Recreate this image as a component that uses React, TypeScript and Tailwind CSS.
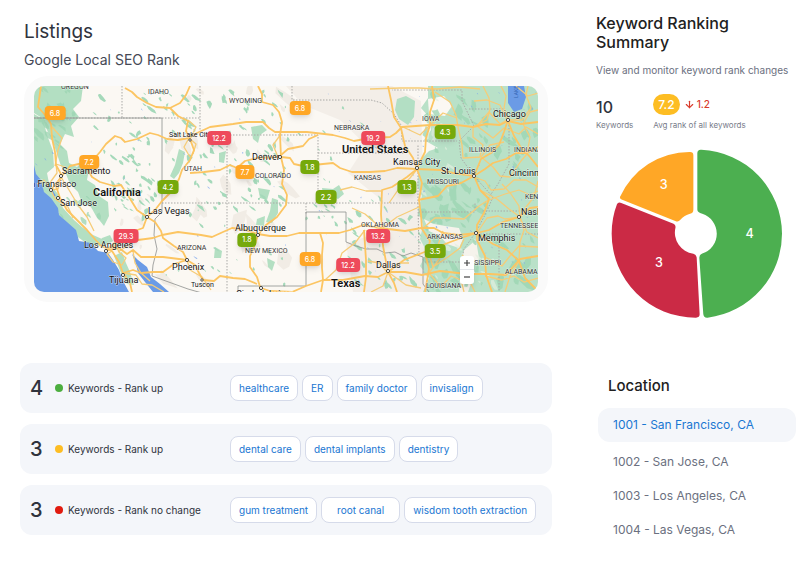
import React from 'react';
import { ArrowDown } from 'lucide-react';

const MAP = { x: 34, y: 86, w: 504, h: 206 };

const pinColors = {
    orange: 'bg-[#ffa726]',
    green: 'bg-[#76a90b]',
    red: 'bg-[#ee4a5b]',
};

type Pin = { x: number; y: number; rank: string; color: keyof typeof pinColors };

const pins: Pin[] = [
    { x: 55, y: 113, rank: '6.8', color: 'orange' },
    { x: 89, y: 162, rank: '7.2', color: 'orange' },
    { x: 168, y: 187, rank: '4.2', color: 'green' },
    { x: 126, y: 236, rank: '29.3', color: 'red' },
    { x: 219, y: 138, rank: '12.2', color: 'red' },
    { x: 245, y: 172, rank: '7.7', color: 'orange' },
    { x: 300, y: 108, rank: '6.8', color: 'orange' },
    { x: 310, y: 167, rank: '1.8', color: 'green' },
    { x: 326, y: 197, rank: '2.2', color: 'green' },
    { x: 247, y: 240, rank: '1.8', color: 'green' },
    { x: 310, y: 259, rank: '6.8', color: 'orange' },
    { x: 348, y: 265, rank: '12.2', color: 'red' },
    { x: 373, y: 138, rank: '19.2', color: 'red' },
    { x: 378, y: 236, rank: '13.2', color: 'red' },
    { x: 445, y: 132, rank: '4.3', color: 'green' },
    { x: 407, y: 187, rank: '1.3', color: 'green' },
    { x: 435, y: 251, rank: '3.5', color: 'green' },
];

const states: [string, number, number][] = [
    ['OREGON', 61, 89],
    ['IDAHO', 148, 94],
    ['WYOMING', 229, 103],
    ['UTAH', 184, 171],
    ['COLORADO', 255, 178],
    ['ARIZONA', 177, 250],
    ['NEW MEXICO', 245, 253],
    ['NEBRASKA', 334, 130],
    ['KANSAS', 354, 180],
    ['IOWA', 422, 121],
    ['ILLINOIS', 469, 152],
    ['INDIANA', 514, 152],
    ['MISSOURI', 427, 184],
    ['KENTUCKY', 525, 199],
    ['TENNESSEE', 500, 228],
    ['ARKANSAS', 427, 239],
    ['MISSISSIPPI', 462, 265],
    ['ALABAMA', 505, 274],
    ['LOUISIANA', 426, 288],
    ['OKLAHOMA', 361, 227],
];

// name, label x, label y, marker x, marker y
const cities: [string, number, number, number, number][] = [
    ['Sacramento', 62, 174, 61, 176],
    ['San Fransisco', 20, 187, 51, 190],
    ['San Jose', 60, 206, 58, 198],
    ['Las Vegas', 148, 214, 147, 217],
    ['Los Angeles', 84, 248, 106, 251],
    ['Tijuana', 109, 283, 123, 275],
    ['Phoenix', 172, 270, 187, 260],
    ['Denver', 252, 160, 280, 157],
    ['Albuquerque', 235, 231, 258, 235],
    ['Chicago', 493, 117, 508, 120],
    ['Kansas City', 393, 165, 417, 168],
    ['St. Louis', 441, 174, 474, 176],
    ['Cincinnati', 509, 176, 545, 176],
    ['Nashville', 521, 215, 519, 217],
    ['Memphis', 478, 241, 476, 233],
    ['Dallas', 376, 268, 388, 271],
];

const highways = [
    'M41 86 L40 93 L38 107 L46 116 L51 124 L52 138 L55 152 L56 165 L62 176 L56 186 L60 198 L67 210 L77 220 L87 230 L100 245 L112 251 L119 262 L123 273 L130 283 L132 292',
    'M51 190 L62 176 L70 166 L83 163 L93 160 L100 152 L106 144 L115 136 L121 138 L125 142 L137 139 L150 133 L158 135 L167 139 L178 140 L189 138 L197 133 L210 127 L233 124 L246 122 L263 122 L269 128 L275 132 L307 132 L333 135 L345 138 L354 141 L370 138 L390 137 L396 133 L402 127 L430 125 L457 125 L473 127 L486 124 L500 125 L508 121 L521 124 L538 122',
    'M258 86 L262 94 L262 102 L273 105 L279 112 L282 122 L280 135 L281 157 L284 170 L282 184 L287 195 L286 205 L277 217 L266 225 L258 235 L254 247 L250 256 L250 267 L257 277 L261 290',
    'M190 173 L204 172 L220 170 L230 165 L237 168 L245 161 L257 158 L281 157 L290 158 L294 164 L303 166 L333 163 L340 168 L352 172 L370 172 L385 171 L397 168 L417 169 L440 170 L453 173 L474 176 L485 169 L493 163 L506 159 L516 153 L527 153 L538 147',
    'M281 155 L288 149 L303 146 L309 139 L318 135',
    'M125 88 L132 92 L137 97 L147 103 L156 107 L170 108 L180 103 L186 95 L190 86',
    'M170 108 L178 116 L188 121 L186 131 L190 139 L194 150 L190 160 L182 170 L179 179 L173 190 L162 201 L155 210 L147 217 L143 228 L132 232 L119 239 L107 250',
    'M107 250 L122 242 L138 240 L153 238 L162 235 L178 232 L201 235 L212 237 L223 232 L232 228 L242 229 L258 234 L270 236 L287 236 L299 233 L320 233 L339 233 L350 230 L363 225 L374 227 L388 229 L405 231 L421 228 L434 228 L443 233 L459 235 L477 233 L489 230 L503 222 L519 217 L530 208 L538 207',
    'M107 250 L119 248 L127 254 L133 250 L141 257 L163 257 L187 260 L195 265 L199 273 L203 280 L214 281 L220 276 L233 278 L245 279 L257 284 M261 288 L270 291 L292 292 L306 286 L323 280 L343 280 L365 276 L378 277 L388 272 L405 272 L422 275 L440 271 L467 274 L490 274 L506 275 L520 259 L538 256',
    'M123 273 L133 270 L141 273 L153 272 L163 272 L174 264 L187 260',
    'M81 163 L88 170 L92 177 L100 182 L114 186 M147 217 L137 210 L129 197 L121 185 L114 186',
    'M147 217 L155 222 L161 231 L163 238 L174 246 L183 252 L187 260',
    'M320 233 L323 243 L322 255 L322 268 L323 280 L321 292',
    'M364 230 L365 245 L366 260 L366 277 L364 292',
    'M388 86 L391 100 L394 117 L401 128 L405 146 L413 158 L417 169 L422 183 L419 200 L421 215 L422 229 L430 241 L426 257 L429 269 L425 292',
    'M417 169 L407 177 L392 187 L382 190 L381 214 L382 229 L383 246 L388 272 L394 283 L397 292',
    'M432 86 L434 100 L430 112 L430 125 L426 138 L425 152 L417 168',
    'M418 200 L438 196 L447 186 L461 183 L474 176 L480 190 L489 199 L484 213 L477 225 L477 240 L485 256 L486 275 L492 292',
    'M388 272 L404 260 L422 253 L440 246 L453 241 L464 237 L477 233 L493 244 L507 250 L519 261 L525 278 L538 291',
    'M508 120 L504 132 L499 145 L491 153 L481 159 L474 176 M508 121 L514 136 L520 146 L530 157 L538 167',
];

const localRoads = [
    'M370 89 L400 88 L419 88 L437 89 L460 87 L480 89 M435 92 L450 102 L456 115 L458 127 L462 145 L463 158 L481 157 L490 145 L504 142 M483 86 L489 98 L490 109 L487 120 L473 127 L473 137 L483 145 L480 156 L493 167 L500 176 L510 177 L521 161 L527 154 L530 137 L523 124 L530 112 L538 110',
    'M474 101 L487 100 L500 105 L507 120 L500 124 L489 112 L477 126 L493 138 L504 128 L519 134 L526 127 L538 134 M501 86 L506 96 L504 108 L509 120 L522 120 L531 108 L526 95 L528 86',
    'M474 177 L485 181 L491 190 L504 189 L514 180 L526 180 L538 187 M480 190 L497 199 L509 209 L520 217 L524 230 L520 242 L519 260 M520 218 L526 207 L534 197 L538 181 M502 184 L511 194 L519 206 L520 217 M489 200 L505 194 L519 190 L530 195 L538 191',
    'M418 168 L410 178 L398 190 L389 203 M381 191 L366 191 L352 187 L340 190 M382 229 L365 214 L352 208 M422 229 L435 218 L447 218 L464 219 L479 206 L490 199 M443 231 L438 245 L430 257 L433 267 L448 257 L460 248 L464 239 M440 258 L429 273 L441 287 L451 276 L461 280 L464 292',
    'M477 233 L487 218 L498 216 L505 219 L520 217 M485 257 L502 266 L510 256 L519 246 L538 247 M520 260 L510 276 L505 292 M485 276 L502 280 L514 276 L524 282 L538 278 M520 218 L527 232 L538 238 M462 255 L471 263 L467 276 L475 292',
    'M388 273 L379 263 L368 261 M388 272 L400 263 L409 263 M388 272 L383 286 L371 292 M388 272 L406 285 L421 288 M365 230 L355 243 L342 253 L336 270 L325 280 M366 231 L381 229 L397 217 L419 207',
    'M112 251 L107 254 L113 262 L122 265 L126 258 L119 252 L115 243 M123 273 L136 275 L142 284 L152 285 L164 292 M133 251 L135 263 L141 273 L150 281 M118 252 L130 244 L132 237 M187 260 L190 270 L202 277 L211 290',
    'M37 184 L44 180 L51 190 L55 199 L68 207 L73 218 M61 177 L69 190 L78 205 L87 217 L94 231 M51 190 L58 189 L61 177 M52 127 L62 138 L58 150 L55 166 M49 184 L57 173 L56 164 L65 167',
    'M190 157 L184 147 L189 138 L196 144 L193 154 M190 139 L196 127 L188 120 M278 157 L273 145 L281 134 M403 127 L420 135 L430 125 L443 113 L457 118 M516 86 L528 96 L538 93',
];

const forests = [
    'M34 86 L83 86 L81 101 L73 109 L79 117 L71 126 L74 137 L65 134 L60 144 L67 151 L69 163 L77 167 L84 160 L89 169 L87 180 L95 185 L99 196 L108 202 L109 216 L104 226 L96 216 L91 207 L82 203 L78 192 L70 184 L66 174 L61 166 L57 154 L53 142 L47 130 L42 118 L34 113 Z',
    'M34 114 L43 119 L47 135 L53 151 L54 167 L47 173 L49 183 L58 194 L63 208 L74 220 L82 227 L93 235 L102 239 L107 249 L99 246 L86 243 L75 235 L67 225 L59 213 L52 202 L42 190 L34 181 Z',
    'M102 238 L110 235 L113 241 L107 245 L98 244 Z',
    'M114 256 L122 252 L126 263 L130 272 L134 285 L127 284 L121 273 Z',
    'M179 149 L185 152 L183 163 L179 173 L174 179 L170 176 L175 165 Z',
    'M251 127 L262 125 L267 130 L260 135 L258 143 L253 139 Z',
    'M258 188 L270 190 L267 200 L260 198 Z',
    'M272 198 L278 200 L278 213 L272 223 L266 222 L270 211 Z',
    'M322 188 L333 189 L339 185 L344 194 L338 199 L331 196 L324 199 Z',
    'M219 153 L226 151 L224 163 L219 162 Z',
    'M267 258 L275 262 L272 271 L268 267 Z',
    'M257 219 L265 216 L264 226 L256 225 Z',
    'M215 247 L222 251 L221 258 L214 258 Z',
];

const stateLines = [
    'M34 118 H162 V212 L155 219 L154 235 L157 249 L153 265 L152 276 L188 289 L202 293',
    'M238 293 V286 H306 V212 H346 V242 L356 246 L366 249 L377 249 L385 253 L395 252 L403 256 L411 253 L423 257 V284 L429 292',
];

const dottedLines = [
    'M122 86 V118 H200 M200 86 V135 H227 V293 M227 135 H318 V203 M292 86 V100 H371 L382 103 L394 114 L401 125 L402 141 H457 M34 118 H122 M162 203 H418 V145 M318 153 H404 M306 203 V214 M419 212 H475 V203 M418 203 L419 255 M425 262 H461 L464 249 L476 232 L486 213 L493 197 L474 176 L461 158 L459 141 L474 126 L462 101 L462 90 H392 M469 109 H504 M509 125 V164 L498 184 L487 200 M477 234 H538 M499 235 V292 M538 211 H481',
];

// deterministic noise, so the terrain is the same on each render
const noise = (seed: number) => {
    let s = seed;
    return () => {
        s = (s * 16807) % 2147483647;
        return s / 2147483647;
    };
};

const patches = (seed: number, x: number, y: number, w: number, h: number, count: number, size: number) => {
    const rand = noise(seed);
    let d = '';
    for (let i = 0; i < count; i++) {
        const cx = x + rand() * w;
        const cy = y + rand() * h;
        const tilt = rand() * 1.4 - 0.2;
        const r = size * (0.4 + rand());
        for (let k = 0; k < 7; k++) {
            const a = (k / 7) * Math.PI * 2;
            const q = r * (0.5 + rand() * 0.9);
            const px = Math.cos(a) * q * 0.6 + Math.sin(a) * q * tilt;
            const py = Math.sin(a) * q;
            d += `${k === 0 ? 'M' : 'L'}${(cx + px).toFixed(1)} ${(cy + py).toFixed(1)}`;
        }
        d += 'Z';
    }
    return d;
};

const sand = patches(91, 165, 90, 125, 195, 30, 8) + patches(17, 90, 190, 60, 60, 9, 5);
const scrub =
    patches(5, 112, 155, 46, 62, 42, 3) +
    patches(33, 95, 90, 100, 70, 30, 3) +
    patches(71, 165, 88, 120, 60, 30, 3) +
    patches(12, 195, 145, 88, 65, 40, 3) +
    patches(9, 165, 190, 120, 95, 24, 2) +
    patches(51, 285, 90, 80, 110, 12, 2) +
    patches(28, 306, 205, 40, 20, 12, 2) +
    patches(66, 350, 195, 70, 92, 40, 3);
const woods =
    patches(14, 36, 88, 38, 60, 22, 4) +
    patches(83, 425, 90, 112, 200, 60, 5) +
    patches(45, 422, 185, 45, 30, 14, 7) +
    patches(29, 430, 262, 100, 30, 16, 6) +
    patches(74, 60, 182, 40, 45, 10, 3);
const clearings = patches(38, 424, 88, 30, 105, 14, 4) + patches(59, 436, 240, 60, 48, 12, 4);
const lakes =
    patches(21, 36, 88, 150, 100, 20, 1) + patches(62, 350, 90, 188, 200, 60, 1) + patches(7, 190, 90, 150, 190, 14, 1);

const UsaMap: React.FC = () => (
    <svg
        viewBox={`${MAP.x} ${MAP.y} ${MAP.w} ${MAP.h}`}
        className="block w-full font-[Roboto,sans-serif]"
        role="img"
        aria-label="Map of the United States"
    >
        <rect x="34" y="86" width="504" height="206" fill="#fbf8f3" />
        <path d={sand} fill="#f1ece5" />
        <path d="M286 86 L392 86 L421 101 L426 292 L353 292 L346 243 L382 232 L379 198 L348 173 L366 145 L340 120 L303 105 Z" fill="#f3eee8" />

        {/* Eastern lowlands */}
        <path d="M428 86 L538 86 L538 292 L423 292 L429 278 L420 266 L427 252 L420 239 L423 225 L418 209 L422 196 L417 186 L420 160 L429 151 L438 148 L424 140 L431 130 L429 117 L421 108 L428 98 Z" fill="#b9e1c8" />
        <path d="M397 99 L406 96 L415 101 L414 117 L408 125 L399 119 L395 110 Z" fill="#b3dfc4" />
        <path d="M428 99 L444 96 L452 106 L445 116 L429 114 Z" fill="#fbf8f3" />
        <path d="M424 219 L434 224 L445 226 L459 228 L463 239 L459 248 L447 244 L440 236 L429 231 Z M464 250 L476 240 L479 258 L474 275 L468 292 L459 292 L461 266 Z" fill="#f6f3ec" />
        {forests.map((d) => (
            <path key={d} d={d} fill="#b3dfc2" />
        ))}
        <path d={clearings} fill="#e3efdf" opacity="0.7" />
        <path d={woods} fill="#9bd4b2" opacity="0.75" />
        <path d={scrub} fill="#a5d9ba" />

        {/* Water */}
        <path d="M34 165 L36 174 L41 180 L44 192 L51 198 L58 208 L59 215 L67 222 L76 230 L79 241 L91 243 L98 251 L108 253 L113 260 L119 270 L123 281 L129 292 L34 292 Z" fill="#6b9be6" />
        <path d="M132 254 L138 260 L147 267 L151 277 L160 284 L169 292 L153 292 L145 282 L138 273 L136 264 Z" fill="#6b9be6" />
        <path d="M508 86 L524 86 L526 97 L522 109 L514 112 L508 103 Z" fill="#6b9be6" />
        <path d={lakes} fill="#7ba6ee" opacity="0.75" />
        <path d="M46 185 L50 188 L55 196" fill="none" stroke="#6b9be6" strokeWidth="2" />

        {/* Borders */}
        {dottedLines.map((d) => (
            <path key={d} d={d} fill="none" stroke="#a9a9a6" strokeWidth="1" strokeDasharray="1.5 1.5" />
        ))}
        {stateLines.map((d) => (
            <path key={d} d={d} fill="none" stroke="#8d8f8e" strokeWidth="0.8" />
        ))}

        {/* Roads */}
        {localRoads.map((d) => (
            <path key={d} d={d} fill="none" stroke="#f6cc78" strokeWidth="1.3" strokeLinejoin="round" />
        ))}
        {highways.map((d) => (
            <path key={d} d={d} fill="none" stroke="#fcc562" strokeWidth="1.8" strokeLinejoin="round" />
        ))}

        {/* Labels */}
        <g stroke="#ffffff" strokeWidth="1" strokeOpacity="0.6" paintOrder="stroke" strokeLinejoin="round">
            {states.map(([name, x, y]) => (
                <text key={name} x={x} y={y} fontSize="7" fill="#333333">
                    {name}
                </text>
            ))}
            {cities.map(([name, x, y]) => (
                <text key={name} x={x} y={y} fontSize="9" fill="#111111">
                    {name}
                </text>
            ))}
            <text x="169" y="137" fontSize="7" fill="#111111">Salt Lake City</text>
            <text x="191" y="287" fontSize="7" fill="#111111">Tuscon</text>
            <text x="236" y="297" fontSize="9" fill="#111111">Ciudad Juárez</text>
            <text x="93" y="196" fontSize="11" fontWeight="600" fill="#111111">California</text>
            <text x="342" y="153" fontSize="11" fontWeight="600" fill="#111111">United States</text>
            <text x="331" y="287" fontSize="11" fontWeight="600" fill="#111111">Texas</text>
            <text x="0" y="0" fontSize="5" fill="#3566b5" stroke="none" transform="translate(518 98) rotate(-90)">LAKE</text>
        </g>
        {cities.map(([name, , , x, y]) => (
            <circle key={name} cx={x} cy={y} r="1.6" fill="#ffffff" stroke="#333333" strokeWidth="0.9" />
        ))}
        <circle cx="190" cy="140" r="1.2" fill="#ffffff" stroke="#333333" strokeWidth="0.8" />
        <circle cx="202" cy="280" r="1.2" fill="#ffffff" stroke="#333333" strokeWidth="0.8" />
        <circle cx="261" cy="288" r="1.6" fill="#ffffff" stroke="#333333" strokeWidth="0.9" />
    </svg>
);

const RankDonut: React.FC = () => (
    <svg viewBox="60 27 520 513" className="block w-full" role="img" aria-label="Keywords by rank change">
        <path
            d="M321 40 Q321 28 333 29 A256 256 0 0 1 577 283 A256 256 0 0 1 352 537 Q340 538 339 526 L327 356 Q327 347 336 343 A63 63 0 0 0 336 223 Q321 219 321 210 Z"
            fill="#4caf50"
        />
        <path
            d="M309 46 Q309 36 299 36 A230 230 0 0 0 87 172 Q86 177 92 180 L258 246 Q264 248 269 242 Q282 227 299 223 Q309 221 309 211 Z"
            fill="#ffa726"
        />
        <path
            d="M78 194 Q81 187 91 190 L249 253 Q256 257 255 264 A65 65 0 0 0 309 344 Q319 347 319 355 L328 527 Q328 537 317 537 A254 254 0 0 1 62 283 Q62 235 78 194 Z"
            fill="#cb2a45"
        />
        <g fill="#ffffff" fontSize="38" textAnchor="middle" fontWeight="500">
            <text x="479" y="295">4</text>
            <text x="205" y="385">3</text>
            <text x="219" y="147">3</text>
        </g>
    </svg>
);

const keywordRows = [
    { count: 4, dot: 'bg-[#4cae3f]', label: 'Keywords - Rank up', tags: ['healthcare', 'ER', 'family doctor', 'invisalign'] },
    { count: 3, dot: 'bg-[#fdbd23]', label: 'Keywords - Rank up', tags: ['dental care', 'dental implants', 'dentistry'] },
    { count: 3, dot: 'bg-[#e11b0f]', label: 'Keywords - Rank no change', tags: ['gum treatment', 'root canal', 'wisdom tooth extraction'] },
];

const locations = ['1001 - San Francisco, CA', '1002 - San Jose, CA', '1003 - Los Angeles, CA', '1004 - Las Vegas, CA'];

const App: React.FC = () => {
    return (
        <div className="flex gap-11 bg-white pl-5 pr-4 font-[Inter,sans-serif] text-[#2f333d]">
            <main className="min-w-0 flex-1 pt-5">
                <div className="px-1">
                    <h1 className="text-[19px] leading-6">Listings</h1>
                    <h2 className="mt-1 text-sm leading-6 text-[#454955]">Google Local SEO Rank</h2>
                </div>

                {/* Map */}
                <section className="mx-1 mt-1 rounded-3xl bg-[#fafafa] p-[10px]">
                    <div className="relative overflow-hidden rounded-[10px]">
                        <UsaMap />
                        {pins.map((pin) => (
                            <span
                                key={`${pin.x}-${pin.y}`}
                                className={`absolute flex h-[14px] -translate-x-1/2 -translate-y-1/2 items-center rounded-[4px] px-[5px] text-[7px] leading-none font-medium text-white shadow-md ${pinColors[pin.color]}`}
                                style={{
                                    left: `${((pin.x - MAP.x) / MAP.w) * 100}%`,
                                    top: `${((pin.y - MAP.y) / MAP.h) * 100}%`,
                                }}
                            >
                                {pin.rank}
                            </span>
                        ))}
                        <div className="absolute right-16 bottom-2 flex w-[14px] flex-col divide-y divide-gray-200 rounded-[3px] bg-white shadow-md">
                            <button type="button" aria-label="Zoom in" className="flex h-[14px] items-center justify-center">
                                <svg viewBox="0 0 6 6" className="size-[6px]" stroke="#444444" strokeWidth="1.2">
                                    <path d="M0 3 H6 M3 0 V6" />
                                </svg>
                            </button>
                            <button type="button" aria-label="Zoom out" className="flex h-[14px] items-center justify-center">
                                <svg viewBox="0 0 6 6" className="size-[6px]" stroke="#444444" strokeWidth="1.2">
                                    <path d="M0 3 H6" />
                                </svg>
                            </button>
                        </div>
                    </div>
                </section>

                {/* Keyword groups */}
                <section className="mt-[61px] flex flex-col gap-[11px]">
                    {keywordRows.map((row) => (
                        <div key={row.tags[0]} className="flex h-[50px] items-center rounded-xl bg-[#f4f6fa] pr-3 pl-[10px]">
                            <div className="flex w-[200px] shrink-0 items-center">
                                <span className="w-[25px] text-xl leading-6 font-medium">{row.count}</span>
                                <span className={`size-2 rounded-full ${row.dot}`} />
                                <span className="ml-[5px] text-[10px] leading-4">{row.label}</span>
                            </div>
                            <div className="flex gap-1">
                                {row.tags.map((tag) => (
                                    <button
                                        key={tag}
                                        type="button"
                                        className={`h-[26px] rounded-lg border border-[#d6dbea] bg-white text-[10px] leading-4 whitespace-nowrap text-[#1976d2] ${
                                            tag === 'root canal' ? 'px-[15px]' : 'px-2'
                                        }`}
                                    >
                                        {tag}
                                    </button>
                                ))}
                            </div>
                        </div>
                    ))}
                </section>
            </main>

            <aside className="w-[200px] shrink-0 pt-[14px]">
                <h2 className="text-base leading-[19px] font-medium text-[#212121]">
                    Keyword Ranking
                    <br />
                    Summary
                </h2>
                <p className="mt-[10px] text-[10px] leading-4 whitespace-nowrap text-[#6b7080]">View and monitor keyword rank changes</p>

                <div className="mt-4 flex gap-5">
                    <div>
                        <div className="flex h-[21px] items-center pt-1 text-base leading-5 font-medium">10</div>
                        <div className="mt-1 text-[8px] leading-3 text-[#777b89]">Keywords</div>
                    </div>
                    <div>
                        <div className="flex h-[21px] items-center">
                            <span className="flex h-[21px] items-center rounded-full bg-[#fdbd23] px-[5px] text-xs font-medium text-white">7.2</span>
                            <ArrowDown className="ml-1 size-[11px] text-[#d93a2b]" strokeWidth={2.5} />
                            <span className="ml-[2px] text-[10px] font-medium text-[#d93a2b]">1.2</span>
                        </div>
                        <div className="mt-1 text-[8px] leading-3 text-[#777b89]">Avg rank of all keywords</div>
                    </div>
                </div>

                <div className="mt-[18px] pr-[13px] pl-[15px]">
                    <RankDonut />
                </div>

                <h2 className="mt-[57px] ml-3 text-[15px] leading-5 font-medium text-[#212121]">Location</h2>
                <nav className="mt-3 ml-[2px] flex flex-col">
                    {locations.map((location, i) => (
                        <a
                            key={location}
                            href="#"
                            className={`flex h-[34px] items-center rounded-xl px-[15px] text-xs ${
                                i === 0 ? 'mb-[3px] bg-[#f4f6fa] text-[#1976d2]' : 'text-[#6b7080]'
                            }`}
                        >
                            {location}
                        </a>
                    ))}
                </nav>
            </aside>
        </div>
    );
};

export default App;
